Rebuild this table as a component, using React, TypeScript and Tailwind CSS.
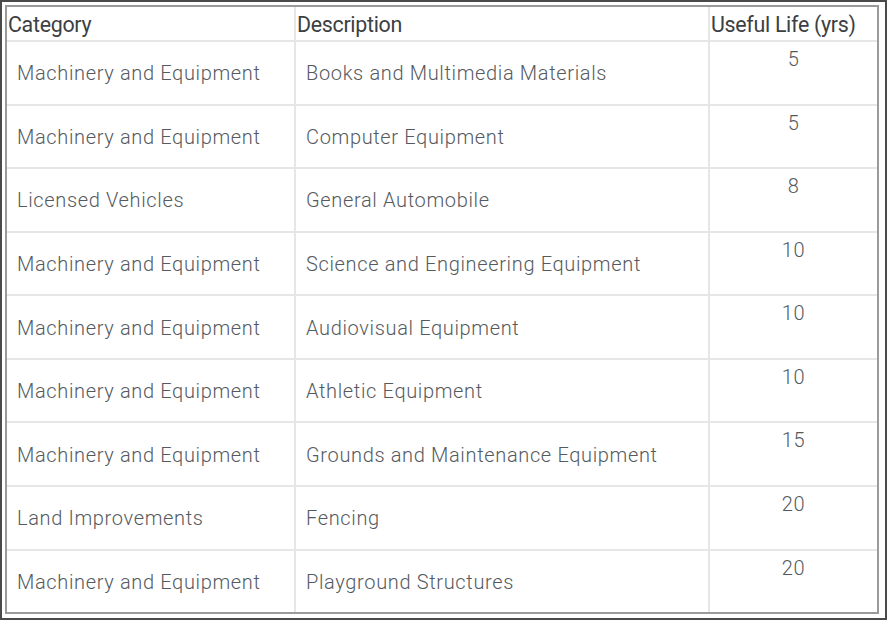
import React from "react";

const rows: [string, string, string][] = [
  ["Machinery and Equipment", "Books and Multimedia Materials", "5"],
  ["Machinery and Equipment", "Computer Equipment", "5"],
  ["Licensed Vehicles", "General Automobile", "8"],
  ["Machinery and Equipment", "Science and Engineering Equipment", "10"],
  ["Machinery and Equipment", "Audiovisual Equipment", "10"],
  ["Machinery and Equipment", "Athletic Equipment", "10"],
  ["Machinery and Equipment", "Grounds and Maintenance Equipment", "15"],
  ["Land Improvements", "Fencing", "20"],
  ["Machinery and Equipment", "Playground Structures", "20"],
];

export default function App() {
  return (
    <div className="w-[889px] h-[622px] bg-white" style={{ fontFamily: "Roboto, 'Noto Sans', sans-serif" }}>
      <div className="w-[887px] h-[620px] border-2 border-[#4a4a4a] pt-[3px] pl-[3px] pr-[6px] pb-[4px]">
        <div className="h-full border-2 border-[#9a9a9a] flex flex-col">
          <div className="grid grid-cols-[289px_414px_1fr] h-[35px] border-b-2 border-[#e6e6e6] text-[21.4px] text-[#3c4043] tracking-[-0.3px]">
            <div className="border-r-2 border-[#e6e6e6] pl-[1px] leading-[36px]">Category</div>
            <div className="border-r-2 border-[#e6e6e6] pl-[1px] leading-[36px]">Description</div>
            <div className="pl-[1px] leading-[36px]">Useful Life (yrs)</div>
          </div>
          {rows.map((r, i) => (
            <div
              key={i}
              className={`grid grid-cols-[289px_414px_1fr] flex-1 text-[20px] font-light text-[#555a60] tracking-[0.65px] ${i < rows.length - 1 ? "border-b-2 border-[#e6e6e6]" : ""}`}
            >
              <div className="border-r-2 border-[#e6e6e6] pl-[10px] flex items-center pt-[1px]">{r[0]}</div>
              <div className="border-r-2 border-[#e6e6e6] pl-[10px] flex items-center pt-[1px]">{r[1]}</div>
              <div className="text-center pt-[2px]">{r[2]}</div>
            </div>
          ))}
        </div>
      </div>
    </div>
  );
}
